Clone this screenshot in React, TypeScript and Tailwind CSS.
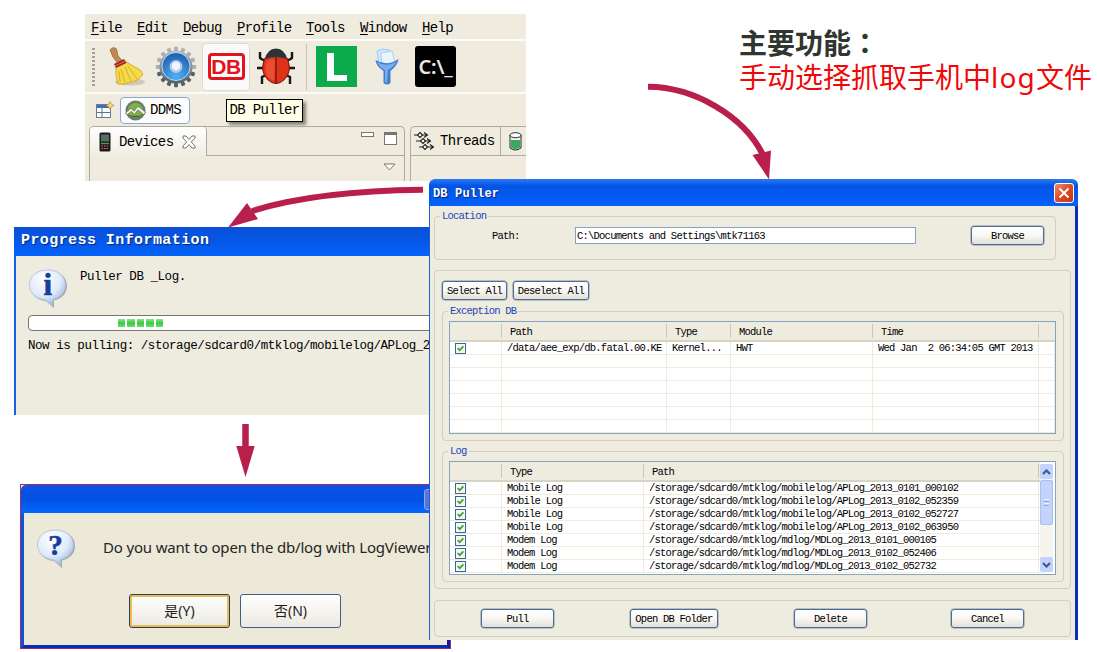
import type { ReactNode } from "react";

const MONO = "font-['Liberation_Mono',monospace]";
const SMALL = "text-[10.5px] tracking-[-0.78px] leading-[12px]";

function XpButton({ children, className = "" }: { children: ReactNode; className?: string }) {
  return (
    <button
      className={`flex h-[19px] shrink-0 items-center justify-center whitespace-pre rounded-[3px] border-[1.5px] border-[#4c6c90] bg-gradient-to-b from-white via-[#f8f7f3] to-[#e3e0d6] shadow-[0_0_0_0.5px_#7d93ab] ${className}`}
    >
      {children}
    </button>
  );
}

function Check() {
  return (
    <span className="flex h-[11px] w-[11px] items-center justify-center border border-[#3d6795] bg-[#f4f8f2]">
      <svg width="7" height="7" viewBox="0 0 7 7">
        <path d="M0.6 3 L2.7 5.2 L6.4 1.4" fill="none" stroke="#3aa13a" strokeWidth="1.7" />
      </svg>
    </span>
  );
}

function MenuBar() {
  const items = [
    ["File", "w-[46px]"],
    ["Edit", "w-[46px]"],
    ["Debug", "w-[54px]"],
    ["Profile", "w-[69px]"],
    ["Tools", "w-[54px]"],
    ["Window", "w-[62px]"],
    ["Help", "w-[40px]"],
  ];
  return (
    <div className="flex h-[25px] items-center pl-[6px] pt-[2px]">
      {items.map(([t, w]) => (
        <span key={t} className={`${w} shrink-0`}>
          <span className="underline underline-offset-2">{t[0]}</span>
          {t.slice(1)}
        </span>
      ))}
    </div>
  );
}

function Broom() {
  return (
    <svg width="38" height="40" viewBox="0 0 38 40" className="shrink-0">
      <ellipse cx="22" cy="35" rx="15" ry="3.5" fill="#cfcaba" />
      <path d="M2 3 Q5 -1 8.500 2 L10 9 L16 15 L11 18 L5 10 Z" fill="#c08a52" stroke="#94683a" strokeWidth="0.8" />
      <path d="M8 19 L17 14 L27 20 Q34 23 35 27 Q31 34 23 35 Q15 38 10 37 Q7 29 8 19 Z" fill="#f4da48" stroke="#c9a228" strokeWidth="0.8" />
      <path d="M13 22 L17 35 M17 20 L23 34 M20 19 L29 32 M11 24 L12 35" stroke="#cda92c" strokeWidth="0.9" fill="none" />
      <path d="M6 17 L16 12 L18.500 16 L8 21 Z" fill="#a8241c" />
      <path d="M7 19 L17.500 14" stroke="#e08a80" strokeWidth="0.8" />
    </svg>
  );
}

function Gear() {
  const teeth = Array.from({ length: 16 }, (_, i) => (i * 360) / 16);
  return (
    <svg width="42" height="42" viewBox="0 0 42 42" className="shrink-0">
      <defs>
        <linearGradient id="gearMetal" x1="0" y1="0" x2="0" y2="1">
          <stop offset="0" stopColor="#b9bfc4" />
          <stop offset="1" stopColor="#566069" />
        </linearGradient>
        <radialGradient id="gearBlue" cx="0.5" cy="0.85" r="0.8">
          <stop offset="0" stopColor="#4fb0f4" />
          <stop offset="1" stopColor="#1d62b5" />
        </radialGradient>
      </defs>
      {teeth.map((a) => (
        <rect key={a} x="19" y="0.800" width="4" height="8" rx="1" fill={a > 90 && a < 270 ? "#566069" : "#a9b0b6"} transform={`rotate(${a} 21 21)`} />
      ))}
      <circle cx="21" cy="21" r="16.500" fill="url(#gearMetal)" />
      <circle cx="21" cy="20.500" r="14" fill="url(#gearBlue)" stroke="#dbe7f2" strokeWidth="0.8" />
      <circle cx="21" cy="20.500" r="6.500" fill="#b4c8e8" />
      <circle cx="21" cy="20" r="4.200" fill="#f4f6fc" />
    </svg>
  );
}

function Bug() {
  return (
    <svg width="40" height="40" viewBox="0 0 40 40" className="shrink-0">
      <g stroke="#171717" strokeWidth="2.400" fill="none">
        <path d="M9 14 L4 11 L4 5 M31 14 L36 11 L36 5 M8 21 L1 21 M32 21 L39 21 M10 28 L6 30 L6 37 M30 28 L34 30 L34 37" />
      </g>
      <path d="M9 11 Q20 5 31 11 Q37 24 28 33 Q20 40 12 33 Q3 24 9 11 Z" fill="#de331b" stroke="#7a160c" strokeWidth="1" />
      <path d="M11 14 Q19 10 19 14 L18 34 Q6 30 11 14 Z" fill="#f2583a" opacity="0.7" />
      <path d="M20 10 L20 37" stroke="#6b1209" strokeWidth="1.200" />
      <path d="M9 12 Q11 2 20 1.500 Q29 2 31 12 Q20 8 9 12 Z" fill="#2b3439" />
    </svg>
  );
}

function Funnel() {
  return (
    <svg width="26" height="38" viewBox="0 0 26 38" className="shrink-0">
      <path d="M3 3 L8 1 L16 2 L20 14 L5 17 Z" fill="#cfe8fb" stroke="#9dcaee" strokeWidth="1" />
      <path d="M7 5 L18 3 L21 15 L8 17 Z" fill="#e9f5fd" stroke="#9dcaee" strokeWidth="0.8" />
      <path d="M1.500 12 Q13 19 24.500 11 Q24 17 16.500 23 L16.500 35 Q13 38 9.500 35 L9.500 23 Q2 18 1.500 12 Z" fill="#3f7fd2" />
      <path d="M3 14 Q13 20 23 13 Q20 19 14 22 L13 35 L11 34 L11 22 Q5 19 3 14 Z" fill="#79aeea" />
    </svg>
  );
}

function Toolbar() {
  return (
    <div className="flex h-[53px] items-center border-t-2 border-white/80 pl-[7px]">
      <div className="h-[40px] w-[3px] shrink-0 bg-[radial-gradient(circle,#a6a293_45%,transparent_50%)] bg-[length:3px_4px]" />
      <div className="ml-[13px] flex items-center">
        <Broom />
      </div>
      <div className="ml-[9px]">
        <Gear />
      </div>
      <div className="ml-[5px] flex h-[48px] w-[48px] shrink-0 items-center justify-center rounded-[4px] border border-[#dedbd0] bg-[#fbfafa]">
        <div className="flex h-[27px] w-[37px] items-center justify-center rounded-[4px] border-[3px] border-[#e3141c] bg-white font-['Liberation_Sans',sans-serif] text-[21px] font-bold leading-none tracking-[-0.5px] text-[#e3141c]">
          DB
        </div>
      </div>
      <div className="ml-[6px]">
        <Bug />
      </div>
      <div className="ml-[10px] h-[46px] w-px shrink-0 bg-[#c6c2b3]" />
      <div className="ml-[9px] flex h-[41px] w-[41px] shrink-0 items-center justify-center bg-[#0bab4c]">
        <svg width="20" height="28" viewBox="0 0 20 28">
          <path d="M0 0 H7 V22 H20 V28 H0 Z" fill="#fff" />
        </svg>
      </div>
      <div className="ml-[17px]">
        <Funnel />
      </div>
      <div className="ml-[15px] flex h-[41px] w-[41px] shrink-0 items-center justify-center rounded-[3px] bg-black font-['Noto_Sans',sans-serif] text-[20px] font-semibold leading-none text-[#e8e8e8]">
        <span className="tracking-[-0.2px]">C:\_</span>
      </div>
    </div>
  );
}

function PerspectiveBar() {
  return (
    <div className="flex h-[34px] items-center border-t-2 border-white/80 pl-[11px]">
      <svg width="18" height="18" viewBox="0 0 18 18" className="shrink-0">
        <rect x="0.500" y="3.500" width="14" height="13" fill="#fff" stroke="#6b7a90" />
        <rect x="1" y="4" width="13" height="3" fill="#3f6fb3" />
        <path d="M6 7 V16 M1 11.500 H14" stroke="#5d7391" />
        <path d="M14 0.500 L15.300 3.200 L18 4.500 L15.300 5.800 L14 8.500 L12.700 5.800 L10 4.500 L12.700 3.200 Z" fill="#f6dc8a" stroke="#b98b2c" strokeWidth="0.7" />
      </svg>
      <div className="ml-[6px] flex h-[27px] w-[70px] shrink-0 items-center rounded-[4px] border border-[#88a9d6] bg-[#fcfcfd] pl-[4px]">
        <svg width="21" height="21" viewBox="0 0 21 21" className="shrink-0">
          <circle cx="10.500" cy="10.500" r="10" fill="#6d7b6a" />
          <circle cx="10.500" cy="10.500" r="7.600" fill="#7db33e" />
          <path d="M0.500 13 L6 8 L9 11 L13 6 L20.500 12 L19 15 L13 10 L9.500 14.500 L6.500 11.500 L2 15 Z" fill="#e8efe2" stroke="#56614f" strokeWidth="0.7" />
          <path d="M4 15 Q10.500 20 17 15 Q10.500 17 4 15 Z" fill="#4b5a48" />
        </svg>
        <span className="ml-[4px]">DDMS</span>
      </div>
      <div className="ml-[36px] flex h-[23px] w-[77px] shrink-0 items-center justify-center whitespace-pre border-[1.5px] border-black bg-[#ffffe6] shadow-[3px_3px_3px_rgba(60,60,50,0.6)]">
        DB Puller
      </div>
    </div>
  );
}

function ViewTabs() {
  return (
    <div className="flex min-h-0 flex-1 gap-[5px] pl-[4px]">
      <div className="flex w-[316px] shrink-0 flex-col rounded-t-[5px] border border-b-0 border-[#aeaa9c]">
        <div className="flex h-[29px]">
          <div className="flex w-[117px] shrink-0 items-center rounded-t-[4px] border-r border-[#aeaa9c] bg-gradient-to-b from-white to-[#f0ede1] pl-[9px]">
            <svg width="12" height="20" viewBox="0 0 12 20" className="shrink-0">
              <rect x="0.500" y="0.500" width="11" height="19" rx="1.500" fill="#1c1c1c" />
              <rect x="2" y="2.500" width="8" height="7" fill="#5b6a66" />
              <path d="M2 11.500 H10" stroke="#3aa84a" strokeWidth="1.300" />
              <path d="M2.500 14 H10 M2.500 16.500 H10" stroke="#d66" strokeWidth="1.200" strokeDasharray="1.500 1" />
            </svg>
            <span className="ml-[8px]">Devices</span>
            <svg width="14" height="14" viewBox="0 0 14 14" className="ml-[9px] shrink-0">
              <path d="M1 1 H4 L7 4.500 L10 1 H13 V3 L9.300 7 L13 11 V13 H10 L7 9.500 L4 13 H1 V11 L4.700 7 L1 3 Z" fill="#fff" stroke="#77756c" />
            </svg>
          </div>
          <div className="flex flex-1 items-start justify-end gap-[10px] border-b border-[#aeaa9c] pr-[7px] pt-[5px]">
            <span className="h-[5px] w-[13px] border border-[#77756c] bg-white" />
            <span className="h-[13px] w-[13px] border border-t-[3px] border-[#77756c] bg-white" />
          </div>
        </div>
        <div className="flex justify-end pr-[8px] pt-[7px]">
          <svg width="13" height="8" viewBox="0 0 13 8">
            <path d="M1 1 H12 L6.500 7 Z" fill="#fff" stroke="#77756c" />
          </svg>
        </div>
      </div>
      <div className="flex flex-1 flex-col rounded-tl-[5px] border-l border-t border-[#aeaa9c]">
        <div className="flex h-[29px] items-center border-b border-[#aeaa9c] pl-[3px]">
          <svg width="21" height="20" viewBox="0 0 21 20" className="shrink-0">
            <g fill="#fff" stroke="#222" strokeWidth="1.100">
              <path d="M0 4 H13 M10 1.500 L13.500 4 L10 6.500" fill="none" />
              <path d="M6 1.500 L8.500 4 L6 6.500 L3.500 4 Z" />
              <path d="M2 10 H16 M13 7.500 L16.500 10 L13 12.500" fill="none" />
              <path d="M9 7.500 L11.500 10 L9 12.500 L6.500 10 Z" />
              <path d="M5 16 H19 M16 13.500 L19.500 16 L16 18.500" fill="none" />
              <path d="M11 13.500 L13.500 16 L11 18.500 L8.500 16 Z" />
            </g>
          </svg>
          <span className="ml-[5px] w-[60px] shrink-0">Threads</span>
          <span className="h-full w-px bg-[#aeaa9c]" />
          <svg width="13" height="19" viewBox="0 0 13 19" className="ml-[8px] shrink-0">
            <path d="M1 3 V16 Q6.500 20 12 16 V3" fill="#eef3ea" stroke="#222" />
            <path d="M2 8 H11 V15.500 Q6.500 18.500 2 15.500 Z" fill="#3fa565" />
            <ellipse cx="6.500" cy="3.200" rx="5.500" ry="2.500" fill="#fff" stroke="#222" />
          </svg>
        </div>
      </div>
    </div>
  );
}

function ToolWindow() {
  return (
    <div className={`absolute left-[85px] top-[14px] flex h-[167px] w-[441px] flex-col overflow-hidden bg-[#efecdf] text-[14px] leading-[16px] tracking-[-0.63px] text-black ${MONO}`}>
      <MenuBar />
      <Toolbar />
      <PerspectiveBar />
      <ViewTabs />
    </div>
  );
}

function Balloon({ mark, id, size }: { mark: string; id: string; size: number }) {
  return (
    <svg width="40" height="40" viewBox="0 0 40 40" className="shrink-0">
      <defs>
        <radialGradient id={id} cx="0.4" cy="0.25" r="0.85">
          <stop offset="0" stopColor="#ffffff" />
          <stop offset="0.55" stopColor="#dfeafa" />
          <stop offset="1" stopColor="#7fa3d6" />
        </radialGradient>
      </defs>
      <path d="M21 2 C32 2 39 8 39 17 C39 25 33 30 26 31.500 L26 39 L18 32 C8 31 3 25 3 17 C3 8 10 2 21 2 Z" fill="#77788a" opacity="0.6" />
      <path d="M19.500 1 C30 1 37.500 7 37.500 16 C37.500 24 32 29 25 30.500 L24.500 37.500 L17.500 31 C8 30 1.500 24 1.500 16 C1.500 7 9 1 19.500 1 Z" fill={`url(#${id})`} stroke="#a9bddb" strokeWidth="0.800" />
      <text x="19.500" y="26" textAnchor="middle" fontFamily="Liberation Serif, serif" fontWeight="bold" fontSize={size} fill="#12409a" stroke="#12409a" strokeWidth="0.600">
        {mark}
      </text>
    </svg>
  );
}

function ProgressWindow() {
  return (
    <div className={`absolute left-[14px] top-[227px] flex h-[188px] w-[416px] flex-col overflow-hidden bg-[#eeebdf] text-black ${MONO}`}>
      <div className="flex h-[29px] shrink-0 items-center whitespace-pre bg-gradient-to-b from-[#0a4fd8] via-[#0557e8] to-[#0463fb] pl-[7px] text-[15px] font-bold tracking-[0.42px] text-white [text-shadow:1px_1px_1px_#06287a]">
        Progress Information
      </div>
      <div className="flex flex-1 flex-col border-l-2 border-[#1262e6] pl-[12px] text-[12.5px] leading-[14px] tracking-[-0.45px]">
        <div className="flex h-[58px] pt-[13px]">
          <Balloon mark="i" id="balloonInfo" size={31} />
          <span className="ml-[12px] whitespace-pre pt-[1px]">Puller DB _Log.</span>
        </div>
        <div className="mt-px flex h-[16px] w-[420px] shrink-0 items-center gap-[2px] rounded-[4px] border-[1.5px] border-[#77756f] bg-white pl-[89px]">
          {[0, 1, 2, 3, 4].map((i) => (
            <span key={i} className="h-[8px] w-[7.4px] bg-gradient-to-b from-[#8be58b] via-[#2fc93c] to-[#6fdc70]" />
          ))}
        </div>
        <span className="mt-[8px] whitespace-pre">Now is pulling: /storage/sdcard0/mtklog/mobilelog/APLog_2</span>
      </div>
    </div>
  );
}

function QuestionDialog() {
  return (
    <div className="absolute left-[20px] top-[484px] flex h-[165px] w-[431px] flex-col overflow-hidden border border-[#a02a6a] bg-[#ece9d8] font-['Noto_Sans','Noto_Sans_CJK_SC',sans-serif]">
      <div className="flex h-[28px] shrink-0 items-center justify-end rounded-tl-[5px] bg-gradient-to-b from-[#0b55e2] via-[#0450e4] to-[#0368ff] pr-[4px]">
        <span className="h-[21px] w-[22px] rounded-[3px] border border-[#8fa8ec] bg-[#5d74cf]" />
      </div>
      <div className="flex flex-1 flex-col border-b-[3px] border-l-[3px] border-r-[3px] border-b-[#0a2fb0] border-l-[#0d55dd] border-r-[#0a1fa0]">
        <div className="flex h-[81px] items-start pl-[12px] pt-[16px]">
          <Balloon mark="?" id="balloonAsk" size={29} />
          <span className="ml-[27px] mt-[8px] whitespace-pre text-[15px] leading-[20px] tracking-[-0.17px] text-[#26251f]">
            Do you want to open the db/log with LogViewer
          </span>
        </div>
        <div className="flex gap-[10px] pl-[105px] text-[14px] leading-none text-[#1d1d1a]">
          <button className="h-[34px] w-[101px] rounded-[3px] border-[1.5px] border-[#23415f] bg-gradient-to-b from-white to-[#ebe9e0] shadow-[inset_0_0_0_2px_#f0b850]">
            是(Y)
          </button>
          <button className="h-[34px] w-[101px] rounded-[3px] border-[1.5px] border-[#3b5f86] bg-gradient-to-b from-white to-[#ebe9e0]">
            否(N)
          </button>
        </div>
      </div>
    </div>
  );
}

const GROUP = "min-w-0 shrink-0 rounded-[4px] border border-[#d3cfbe]";
const LEGEND = "ml-[5px] h-[12px] px-[2px] text-[#1d46b8]";

const EXC_GRID = "grid grid-cols-[52px_165px_64px_142px_166px_1fr]";
const LOG_GRID = "grid grid-cols-[52px_142px_395px_1fr]";
const HEAD = "border-r border-[#cbc7b8] h-[14px] pl-[8px] pt-[2px] flex items-center";
const CELL = "border-b border-r border-[#eeebdf] h-[13px] pl-[5px] flex items-center";

const logs = [
  ["Mobile Log", "/storage/sdcard0/mtklog/mobilelog/APLog_2013_0101_000102"],
  ["Mobile Log", "/storage/sdcard0/mtklog/mobilelog/APLog_2013_0102_052359"],
  ["Mobile Log", "/storage/sdcard0/mtklog/mobilelog/APLog_2013_0102_052727"],
  ["Mobile Log", "/storage/sdcard0/mtklog/mobilelog/APLog_2013_0102_063950"],
  ["Modem Log", "/storage/sdcard0/mtklog/mdlog/MDLog_2013_0101_000105"],
  ["Modem Log", "/storage/sdcard0/mtklog/mdlog/MDLog_2013_0102_052406"],
  ["Modem Log", "/storage/sdcard0/mtklog/mdlog/MDLog_2013_0102_052732"],
];

const exceptionRow = ["/data/aee_exp/db.fatal.00.KE", "Kernel...", "HWT", "Wed Jan  2 06:34:05 GMT 2013", ""];

function ExceptionTable() {
  return (
    <div className="ml-[6px] mt-[4px] h-[113px] w-[607px] overflow-hidden whitespace-pre border border-[#86a2bd] bg-white">
      <div className={`${EXC_GRID} h-[20px] items-center border-b-2 border-[#d8d4c5] bg-[#eeebdf]`}>
        {["", "Path", "Type", "Module", "Time"].map((h, i) => (
          <span key={i} className={HEAD}>{h}</span>
        ))}
      </div>
      {[0, 1, 2, 3, 4, 5, 6].map((r) => (
        <div key={r} className={EXC_GRID}>
          <span className={CELL}>{r === 0 && <Check />}</span>
          {exceptionRow.map((c, i) => (
            <span key={i} className={CELL}>{r === 0 ? c : ""}</span>
          ))}
        </div>
      ))}
    </div>
  );
}

function ScrollArrow({ d }: { d: string }) {
  return (
    <div className="flex h-[15px] items-center justify-center rounded-[2px] bg-[#c3d3fb]">
      <svg width="9" height="6" viewBox="0 0 9 6">
        <path d={d} fill="none" stroke="#3f5a94" strokeWidth="2.200" />
      </svg>
    </div>
  );
}

function LogTable() {
  return (
    <div className="ml-[6px] mt-[4px] flex h-[114px] w-[607px] overflow-hidden whitespace-pre border border-[#86a2bd] bg-white">
      <div className="w-[590px] shrink-0">
        <div className={`${LOG_GRID} h-[20px] items-center border-b-2 border-[#d8d4c5] bg-[#eeebdf]`}>
          {["", "Type", "Path"].map((h, i) => (
            <span key={i} className={HEAD}>{h}</span>
          ))}
        </div>
        {logs.map(([t, p]) => (
          <div key={p} className={LOG_GRID}>
            <span className={CELL}><Check /></span>
            <span className={CELL}>{t}</span>
            <span className={CELL}>{p}</span>
            <span className={CELL} />
          </div>
        ))}
      </div>
      <div className="my-[2px] flex w-[13px] flex-col bg-[#f5f4ee]">
        <ScrollArrow d="M1 5 L4.500 1.500 L8 5" />
        <div className="mt-px flex h-[45px] flex-col items-center justify-center gap-[1px] rounded-[2px] border border-[#a9bff0] bg-[#c3d3fb]">
          <span className="h-px w-[5px] bg-[#eef3ff]" />
          <span className="h-px w-[5px] bg-[#8fa8e0]" />
          <span className="h-px w-[5px] bg-[#eef3ff]" />
          <span className="h-px w-[5px] bg-[#8fa8e0]" />
        </div>
        <div className="flex-1" />
        <ScrollArrow d="M1 1 L4.500 4.500 L8 1" />
      </div>
    </div>
  );
}

function PullerWindow() {
  return (
    <div className={`absolute left-[429px] top-[179px] flex h-[461px] w-[649px] flex-col overflow-hidden rounded-t-[6px] bg-[#eeebdf] text-black ${MONO} ${SMALL}`}>
      <div className="flex h-[27px] shrink-0 items-center justify-between bg-gradient-to-b from-[#2a7bf6] via-[#0453e6] via-25% to-[#0461fb] pl-[4px] pr-[4px] text-white">
        <span className="whitespace-pre pt-[2px] text-[12px] font-bold tracking-[0.15px] [text-shadow:1px_1px_1px_#06287a]">DB Puller</span>
        <span className="flex h-[20px] w-[20px] items-center justify-center rounded-[3px] border border-white bg-gradient-to-br from-[#ee8a68] via-[#dc4a22] to-[#c2380f]">
          <svg width="12" height="12" viewBox="0 0 12 12">
            <path d="M1.500 1.500 L10.500 10.500 M10.500 1.500 L1.500 10.500" stroke="#fff" strokeWidth="2" />
          </svg>
        </span>
      </div>
      <div className="flex flex-1 flex-col border-l border-r-[3px] border-l-[#1c5fd8] border-r-[#0a2fb4] pl-[4px] pt-[4px]">
        <fieldset className={`${GROUP} h-[50px] w-[622px]`}>
          <legend className={LEGEND}>Location</legend>
          <div className="flex items-center pl-[57px] pt-[4px]">
            <span className="w-[83px] shrink-0">Path:</span>
            <div className="flex h-[17px] w-[341px] shrink-0 items-center whitespace-pre border border-[#86a2bd] bg-white pl-[1px]">
              C:\Documents and Settings\mtk71163
            </div>
            <XpButton className="ml-[55px] w-[73px]">Browse</XpButton>
          </div>
        </fieldset>
        <div className={`${GROUP} mt-[10px] h-[319px] w-[637px] pl-[7px] pt-[10px]`}>
          <div className="flex gap-[6px]">
            <XpButton className="w-[65px]">Select All</XpButton>
            <XpButton className="w-[76px]">Deselect All</XpButton>
          </div>
          <fieldset className={`${GROUP} mt-[5px] h-[136px] w-[622px]`}>
            <legend className={LEGEND}>Exception DB</legend>
            <ExceptionTable />
          </fieldset>
          <fieldset className={`${GROUP} mt-[4px] h-[137px] w-[622px]`}>
            <legend className={LEGEND}>Log</legend>
            <LogTable />
          </fieldset>
        </div>
        <div className={`${GROUP} mt-[11px] flex h-[37px] w-[637px] items-center pl-[46px]`}>
          <XpButton className="w-[73px]">Pull</XpButton>
          <XpButton className="ml-[76px] w-[88px]">Open DB Folder</XpButton>
          <XpButton className="ml-[76px] w-[73px]">Delete</XpButton>
          <XpButton className="ml-[84px] w-[73px]">Cancel</XpButton>
        </div>
      </div>
    </div>
  );
}

export default function App() {
  return (
    <main className="relative h-[652px] w-[1097px] overflow-hidden bg-white">
      <ToolWindow />
      <div className="absolute left-[739px] top-[25px] whitespace-nowrap font-['Noto_Sans','Noto_Sans_CJK_SC',sans-serif] text-[28px] leading-[34px]">
        <h1 className="font-bold text-[#30352f]">
          主要功能<span className="font-['Noto_Sans_CJK_TC',sans-serif]">：</span>
        </h1>
        <p className="text-[#f00808]">
          手动选择抓取手机中<span className="tracking-[1.2px]">log</span>文件
        </p>
      </div>
      <ProgressWindow />
      <QuestionDialog />
      <PullerWindow />
      <svg width="1097" height="652" viewBox="0 0 1097 652" className="pointer-events-none absolute left-0 top-0">
        <g fill="none" stroke="#b81f4b" strokeWidth="6">
          <path d="M648 86.800 C694 87 744 116 763 155" />
          <path d="M423 189.800 C360 190.500 300 196 252 211" />
          <path d="M245.500 424 V448" strokeWidth="6.500" />
        </g>
        <g fill="#b81f4b">
          <path d="M752.500 155 L771 150.500 L769 179.500 Z" />
          <path d="M228 227.500 L247 203 L258 219 Z" />
          <path d="M236.300 446 H254.700 L245.500 477 Z" />
        </g>
      </svg>
    </main>
  );
}
